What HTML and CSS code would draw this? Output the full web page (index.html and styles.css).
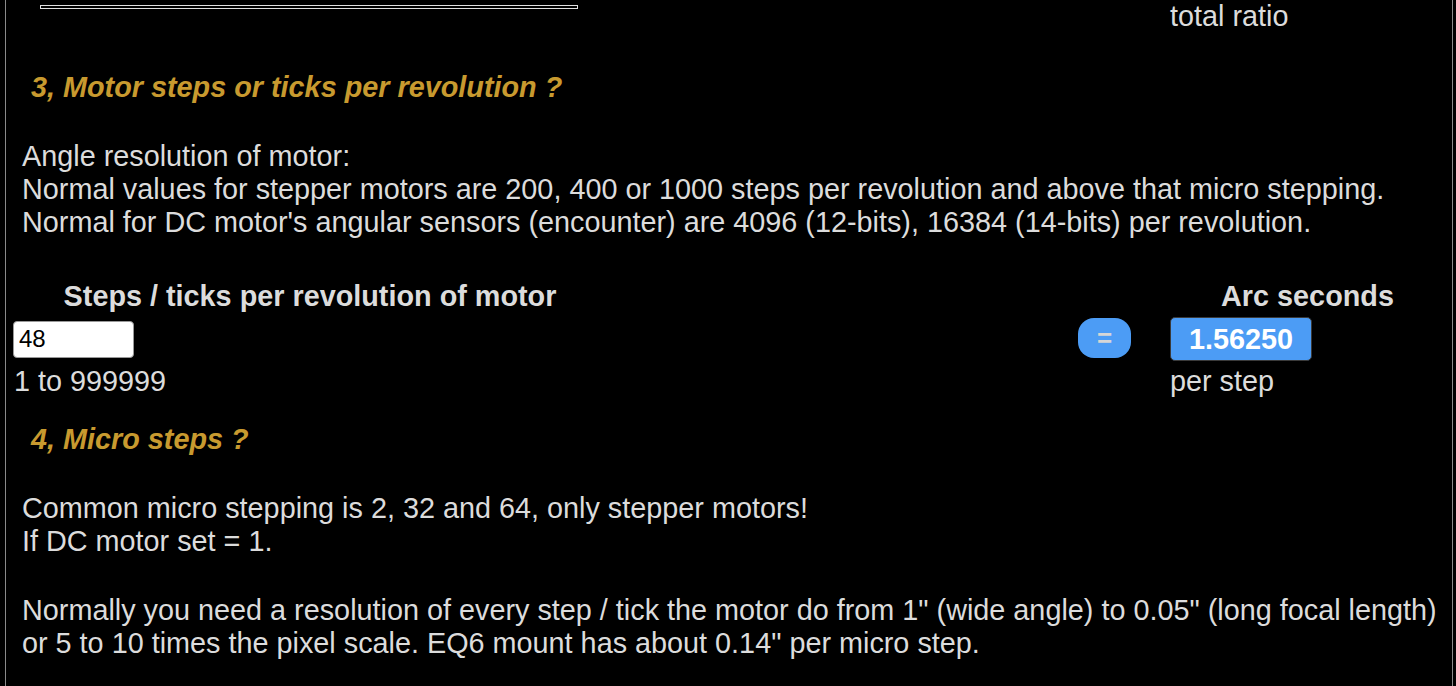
FILE: index.html
```html
<!DOCTYPE html>
<html>
<head>
<meta charset="utf-8">
<link rel="stylesheet" href="styles.css">
</head>
<body>
<div class="page">
  <div class="calc-grid top-grid">
    <div class="bar-cell"><div class="thin-bar"></div></div>
    <div></div><div></div><div></div>
    <div class="unit">total ratio</div>
  </div>

  <h2 class="section-title">3, Motor steps or ticks per revolution ?</h2>
  <p class="info">Angle resolution of motor:<br>Normal values for stepper motors are 200, 400 or 1000 steps per revolution and above that micro stepping.<br>Normal for DC motor's angular sensors (encounter) are 4096 (12-bits), 16384 (14-bits) per revolution.</p>

  <div class="calc-grid steps-grid">
    <div class="col-label">Steps / ticks per revolution of motor</div>
    <div></div><div></div><div></div>
    <div class="col-label">Arc seconds</div>

    <div class="input-cell"><input class="num-input" type="text" value="48"></div>
    <div></div>
    <div class="btn-cell"><button class="eq-btn">=</button></div>
    <div></div>
    <div class="out-cell"><div class="out-box">1.56250</div></div>

    <div class="hint">1 to 999999</div>
    <div></div><div></div><div></div>
    <div class="unit">per step</div>
  </div>

  <h2 class="section-title second">4, Micro steps ?</h2>
  <p class="info">Common micro stepping is 2, 32 and 64, only stepper motors!<br>If DC motor set = 1.</p>
  <p class="info">Normally you need a resolution of every step / tick the motor do from 1" (wide angle) to 0.05" (long focal length)<br>or 5 to 10 times the pixel scale. EQ6 mount has about 0.14" per micro step.</p>
</div>
</body>
</html>
```

FILE: styles.css
```css
html, body {
  margin: 0;
  padding: 0;
  background: #000;
}
body {
  font-family: "Liberation Sans", Arial, sans-serif;
  color: #dcdcdc;
  font-size: 28.8px;
  line-height: 33px;
}
.page {
  margin: 0 3px 0 5px;
  border-left: 1px solid #8a8a8a;
  border-right: 1px solid #8a8a8a;
  padding: 0 7px 40px 7px;
  min-height: 686px;
  box-sizing: border-box;
}
.calc-grid {
  display: grid;
  grid-template-columns: 594px 1fr 53px 39px 275px;
}
.bar-cell {
  padding: 5px 0 0 27px;
}
.thin-bar {
  width: 536px;
  height: 2px;
  border: 1px solid #e0e0e0;
  background: #000;
}
.unit, .hint {
  line-height: 33px;
  white-space: nowrap;
}
.section-title {
  margin: 38px 0 0 0;
  padding-left: 18px;
  font-size: 28.8px;
  line-height: 33px;
  font-weight: bold;
  font-style: italic;
  color: #c89a2f;
}
.section-title.second {
  margin-top: 25px;
}
.info {
  margin: 36px 0 0 0;
  padding-left: 9px;
}
.steps-grid {
  margin-top: 41px;
  align-items: center;
}
.col-label {
  font-weight: bold;
  text-align: center;
  line-height: 33px;
  white-space: nowrap;
}
.input-cell, .btn-cell, .out-cell {
  height: 52px;
  display: flex;
  align-items: center;
}
.num-input {
  width: 121px;
  height: 37px;
  box-sizing: border-box;
  border: 1px solid #999;
  border-radius: 4px;
  background: #fff;
  color: #000;
  font-family: "Liberation Sans", Arial, sans-serif;
  font-size: 24px;
  padding: 0 5px;
  margin: 0;
}
.eq-btn {
  width: 53px;
  height: 40px;
  border: none;
  border-radius: 16px;
  background: #4c9cf5;
  color: #d6d6d6;
  font-family: "Liberation Sans", Arial, sans-serif;
  font-weight: bold;
  font-size: 26px;
  padding: 0;
  margin-top: -2px;
}
.out-box {
  width: 142px;
  height: 44px;
  box-sizing: border-box;
  border: 1px solid #3a3a3a;
  border-radius: 5px;
  background: #4c9cf5;
  color: #fff;
  font-weight: bold;
  font-size: 28.8px;
  line-height: 42px;
  text-align: center;
}
.hint {
  padding-left: 1px;
}
```
